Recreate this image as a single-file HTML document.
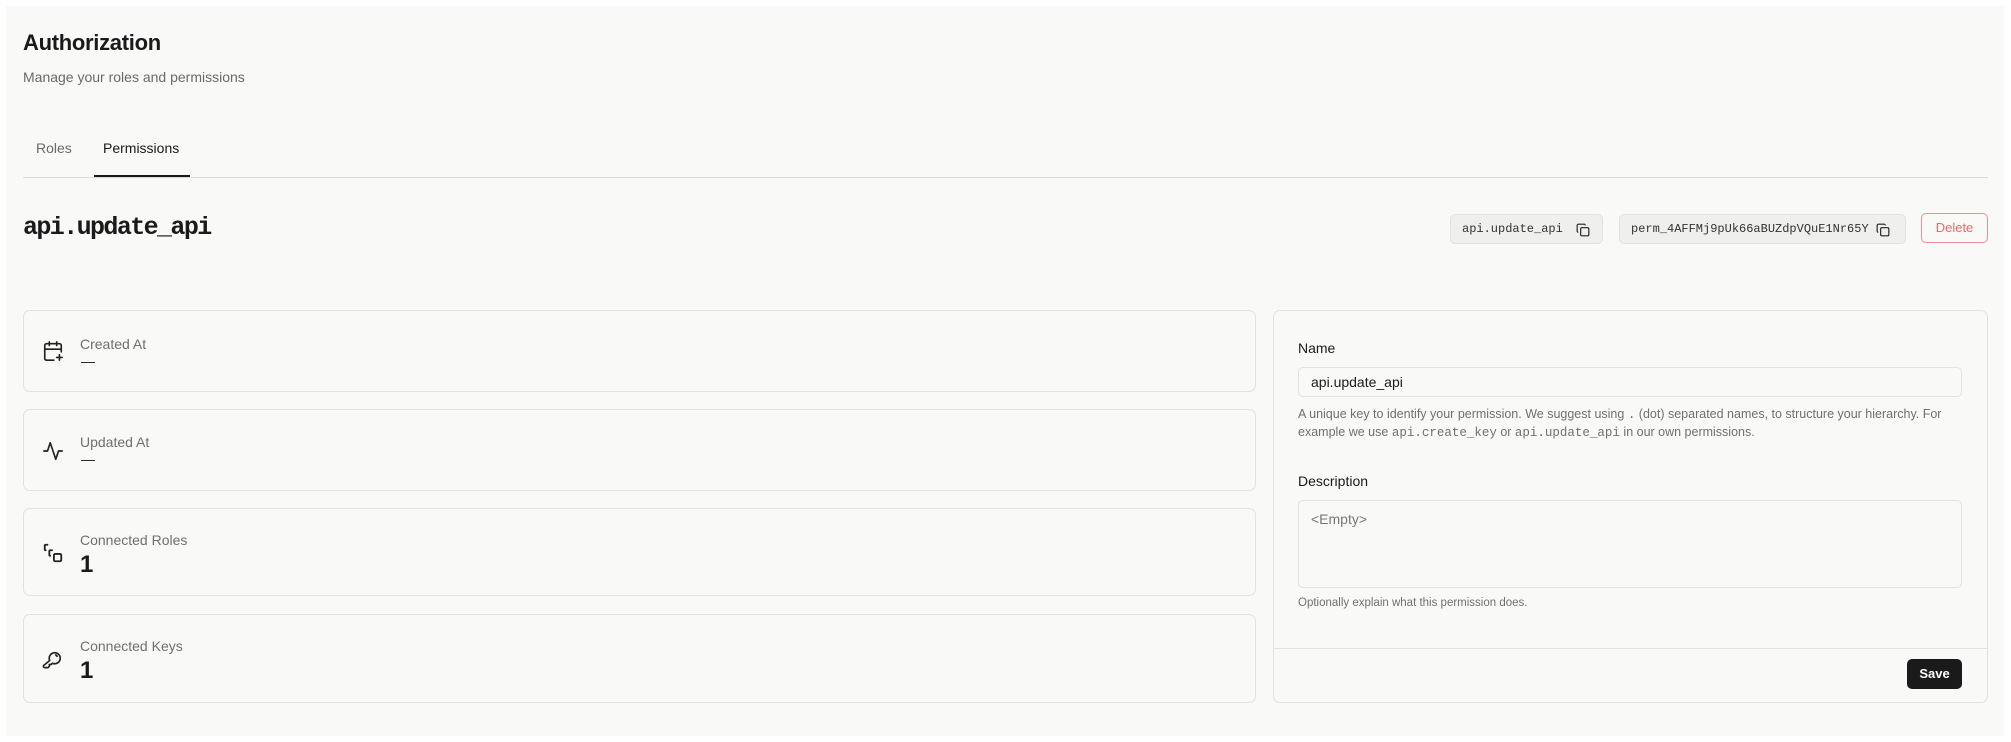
<!DOCTYPE html>
<html><head><meta charset="utf-8"><style>
*{box-sizing:border-box;margin:0;padding:0}
body{width:2011px;height:742px;background:#fff;font-family:"Liberation Sans",sans-serif;color:#1a1a1a;position:relative;overflow:hidden}
.panel{position:absolute;left:6px;top:6px;width:1998px;height:730px;background:#f9f9f8}
.a{position:absolute;white-space:nowrap}
.mono{font-family:"Liberation Mono",monospace}
.card{position:absolute;border:1px solid #e2e2e0;border-radius:7px;background:#f9f9f8}
.lbl{color:#6f6f6f;font-size:14px}
.chip{position:absolute;height:30px;background:#efefee;border:1px solid #e2e2e0;border-radius:5px;font-size:12px;display:flex;align-items:center;padding-left:11px;color:#333}
svg{position:absolute}
</style></head><body>
<div class="panel"></div>
<div class="a" style="left:23px;top:30px;font-size:22px;font-weight:bold;letter-spacing:-0.3px">Authorization</div>
<div class="a" style="left:23px;top:69px;font-size:14px;color:#6a6a6a">Manage your roles and permissions</div>
<div class="a" style="left:36px;top:140px;font-size:14px;color:#6a6a6a">Roles</div>
<div class="a" style="left:103px;top:140px;font-size:14px;color:#1a1a1a">Permissions</div>
<div class="a" style="left:23px;top:177px;width:1965px;height:1px;background:#dcdcda"></div>
<div class="a" style="left:94px;top:175px;width:96px;height:2px;background:#1a1a1a"></div>
<div class="a mono" style="left:23px;top:213px;font-size:25px;font-weight:bold;letter-spacing:-1.6px">api.update_api</div>

<div class="chip mono" style="left:1450px;top:214px;width:153px">api.update_api
<svg style="left:125px;top:8px" width="14" height="14" viewBox="0 0 24 24" fill="none" stroke="#222" stroke-width="2"><rect x="8" y="8" width="14" height="14" rx="2"/><path d="M4 16c-1 0-2-1-2-2V4c0-1 1-2 2-2h10c1 0 2 1 2 2"/></svg></div>
<div class="chip mono" style="left:1619px;top:214px;width:287px">perm_4AFFMj9pUk66aBUZdpVQuE1Nr65Y
<svg style="left:256px;top:8px" width="14" height="14" viewBox="0 0 24 24" fill="none" stroke="#222" stroke-width="2"><rect x="8" y="8" width="14" height="14" rx="2"/><path d="M4 16c-1 0-2-1-2-2V4c0-1 1-2 2-2h10c1 0 2 1 2 2"/></svg></div>
<div class="a" style="left:1921px;top:213px;width:67px;height:30px;border:1px solid #f09090;border-radius:5px;color:#ef6868;font-size:13px;text-align:center;line-height:28px">Delete</div>

<div class="card" style="left:23px;top:310px;width:1233px;height:82px"></div>
<div class="card" style="left:23px;top:409px;width:1233px;height:82px"></div>
<div class="card" style="left:23px;top:508px;width:1233px;height:88px"></div>
<div class="card" style="left:23px;top:614px;width:1233px;height:89px"></div>

<svg style="left:42px;top:340px" width="22" height="22" viewBox="0 0 24 24" fill="none" stroke="#222" stroke-width="1.8" stroke-linecap="round"><path d="M21 13V6a2 2 0 0 0-2-2H5a2 2 0 0 0-2 2v14a2 2 0 0 0 2 2h8M3 10h18M8 2v4M16 2v4M19 16v6M16 19h6"/></svg>
<div class="a lbl" style="left:80px;top:336px">Created At</div>
<div class="a" style="left:81px;top:353px;font-size:14px">—</div>

<svg style="left:42px;top:440px" width="22" height="22" viewBox="0 0 24 24" fill="none" stroke="#222" stroke-width="1.8" stroke-linecap="round" stroke-linejoin="round"><path d="M22 12h-4l-3 9L9 3l-3 9H2"/></svg>
<div class="a lbl" style="left:80px;top:434px">Updated At</div>
<div class="a" style="left:81px;top:451px;font-size:14px">—</div>

<svg style="left:42px;top:542px" width="22" height="22" viewBox="0 0 24 24" fill="none" stroke="#222" stroke-width="2" stroke-linecap="round"><path d="M6 3H4a1 1 0 0 0-1 1v4a1 1 0 0 0 1 1M11 9H9a1 1 0 0 0-1 1v4a1 1 0 0 0 1 1"/><rect x="13" y="13" width="8" height="8" rx="1.5"/></svg>
<div class="a lbl" style="left:80px;top:532px">Connected Roles</div>
<div class="a" style="left:80px;top:551px;font-size:24px;font-weight:bold">1</div>

<svg style="left:42px;top:648px" width="22" height="22" viewBox="0 0 24 24" fill="none" stroke="#222" stroke-width="1.8" stroke-linecap="round" stroke-linejoin="round"><path d="M2.6 18.4 A1.4 1.4 0 0 0 3.6 21.4L6.6 21.4L8 20v-2h2l1.4-1.4a6 6 0 1 0-3-3zM15 7.5l1.5 1.5"/></svg>
<div class="a lbl" style="left:80px;top:638px">Connected Keys</div>
<div class="a" style="left:80px;top:657px;font-size:24px;font-weight:bold">1</div>

<div class="card" style="left:1273px;top:310px;width:715px;height:393px"></div>
<div class="a" style="left:1298px;top:340px;font-size:14px;font-weight:500">Name</div>
<div class="a" style="left:1298px;top:367px;width:664px;height:30px;border:1px solid #e2e2e0;border-radius:5px;font-size:14px;padding:6px 12px">api.update_api</div>
<div class="a" style="left:1298px;top:406px;font-size:12.5px;color:#707070;line-height:17px">A unique key to identify your permission. We suggest using <span class="mono">.</span> (dot) separated names, to structure your hierarchy. For<br>example we use <span class="mono">api.create_key</span> or <span class="mono">api.update_api</span> in our own permissions.</div>
<div class="a" style="left:1298px;top:473px;font-size:14px;font-weight:500">Description</div>
<div class="a" style="left:1298px;top:500px;width:664px;height:88px;border:1px solid #e2e2e0;border-radius:5px;font-size:14px;padding:10px 12px;color:#777">&lt;Empty&gt;</div>
<div class="a" style="left:1298px;top:597px;font-size:11.5px;color:#707070">Optionally explain what this permission does.</div>
<div class="a" style="left:1274px;top:648px;width:713px;height:1px;background:#e2e2e0"></div>
<div class="a" style="left:1907px;top:659px;width:55px;height:30px;background:#1a1a1a;border-radius:5px;color:#fff;font-size:13px;font-weight:bold;text-align:center;line-height:30px">Save</div>
</body></html>
